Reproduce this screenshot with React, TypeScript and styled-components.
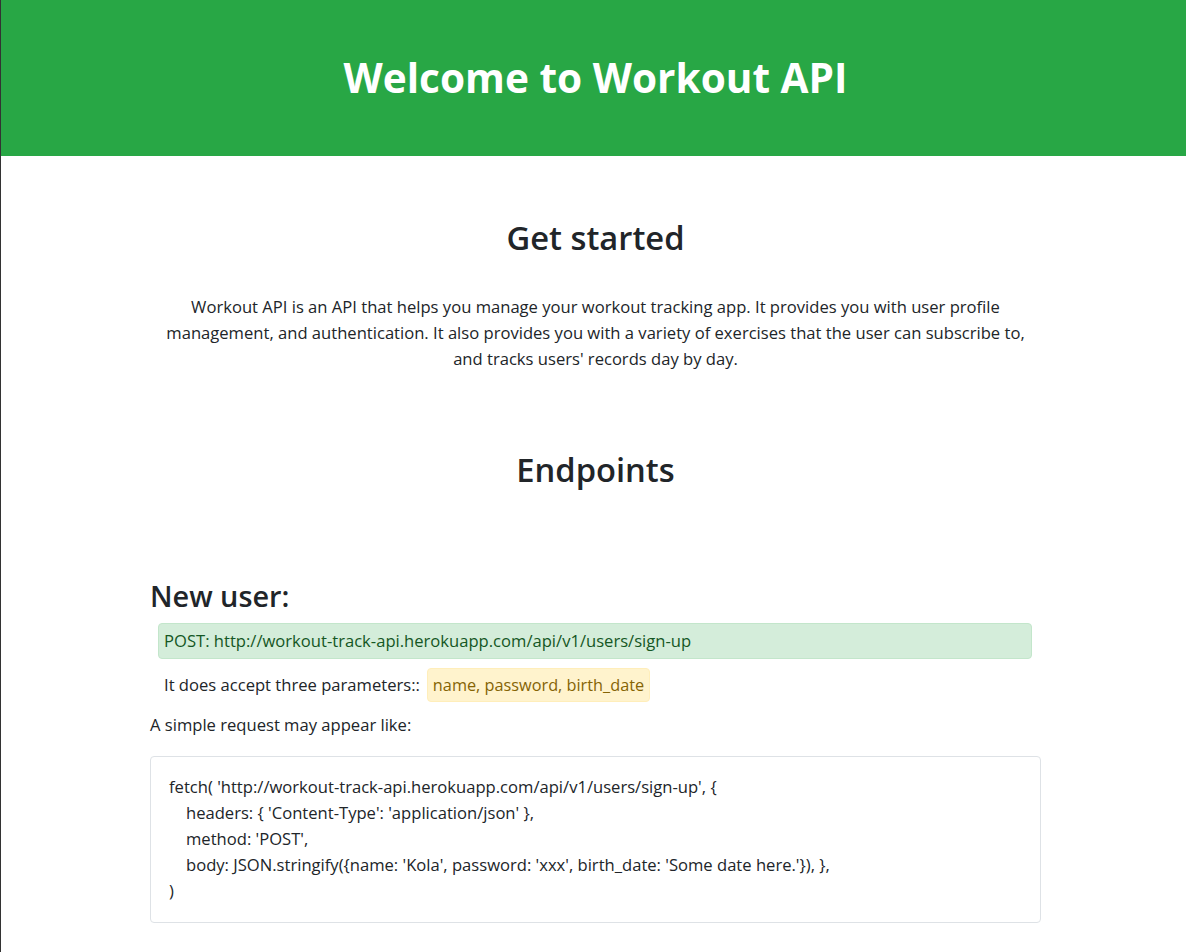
import React from "react";
import styled, { createGlobalStyle } from "styled-components";

const Global = createGlobalStyle`
  html, body { margin: 0; padding: 0; background: #fff; }
  body {
    font-family: "Open Sans", "Noto Sans", sans-serif;
    font-size: 16.6px;
    line-height: 26px;
    color: #212529;
  }
  #root { border-left: 1px solid #333; min-height: 952px; box-sizing: border-box; }
`;

const Page = styled.div`
  display: flex;
  flex-direction: column;
`;

const Header = styled.header`
  background: #28a745;
  height: 156px;
  display: flex;
  align-items: center;
  justify-content: center;
  padding-left: 4px;
`;

const Title = styled.h1`
  margin: 0;
  color: #fff;
  font-size: 40.6px;
  line-height: 48px;
  font-weight: 700;
`;

const Main = styled.main`
  width: 891px;
  margin: 0 auto;
  padding-left: 4px;
  display: flex;
  flex-direction: column;
`;

const SectionTitle = styled.h2<{ $top: number }>`
  margin: ${(p) => p.$top}px 0 0;
  font-size: 32.7px;
  line-height: 38px;
  font-weight: 600;
  text-align: center;
`;

const Intro = styled.p`
  margin: 37px 0 0;
  text-align: center;
`;

const EndpointTitle = styled.h3`
  margin: 88px 0 0;
  font-size: 28.8px;
  line-height: 38px;
  font-weight: 600;
`;

const Alert = styled.div`
  margin: 8px 9px 0 8px;
  padding: 5px;
  background: #d4edda;
  border: 1px solid #c3e6cb;
  border-radius: 4px;
  color: #155724;
  line-height: 24px;
`;

const ParamRow = styled.div`
  margin: 9px 0 0 14px;
  display: flex;
  align-items: center;
  gap: 7px;
`;

const Badge = styled.span`
  padding: 4px 5px;
  background: #fff3cd;
  border: 1px solid #ffeeba;
  border-radius: 4px;
  color: #856404;
  line-height: 24px;
  font-size: 16.3px;
  min-height: 34px;
  box-sizing: border-box;
`;

const Note = styled.p`
  margin: 10px 0 0;
`;

const CodeBox = styled.div`
  margin-top: 18px;
  padding: 17px 18px 18px;
  border: 1px solid #dee2e6;
  border-radius: 4px;
`;

const CodeLine = styled.div<{ $indent?: boolean }>`
  padding-left: ${(p) => (p.$indent ? 17 : 0)}px;
  white-space: pre;
`;

export default function App() {
  return (
    <Page>
      <Global />
      <Header>
        <Title>Welcome to Workout API</Title>
      </Header>
      <Main>
        <SectionTitle $top={63}>Get started</SectionTitle>
        <Intro>
          Workout API is an API that helps you manage your workout tracking app. It provides you with user profile
          <br />
          management, and authentication. It also provides you with a variety of exercises that the user can subscribe to,
          <br />
          and tracks users' records day by day.
        </Intro>
        <SectionTitle $top={79}>Endpoints</SectionTitle>
        <EndpointTitle>New user:</EndpointTitle>
        <Alert>POST: http://workout-track-api.herokuapp.com/api/v1/users/sign-up</Alert>
        <ParamRow>
          <span>It does accept three parameters::</span>
          <Badge>name, password, birth_date</Badge>
        </ParamRow>
        <Note>A simple request may appear like:</Note>
        <CodeBox>
          <CodeLine>fetch( 'http://workout-track-api.herokuapp.com/api/v1/users/sign-up', {"{"}</CodeLine>
          <CodeLine $indent>headers: {"{"} 'Content-Type': 'application/json' {"}"},</CodeLine>
          <CodeLine $indent>method: 'POST',</CodeLine>
          <CodeLine $indent>
            body: JSON.stringify({"{"}name: 'Kola', password: 'xxx', birth_date: 'Some date here.'{"}"}), {"}"},
          </CodeLine>
          <CodeLine>)</CodeLine>
        </CodeBox>
      </Main>
    </Page>
  );
}
